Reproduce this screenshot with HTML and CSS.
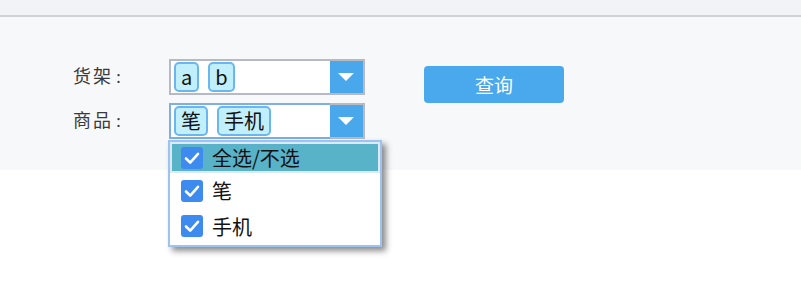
FILE: index.html
```html
<!DOCTYPE html>
<html lang="zh-CN">
<head>
<meta charset="utf-8">
<title>查询</title>
<link rel="stylesheet" href="styles.css">
</head>
<body>
<div class="topbar"></div>
<div class="panel">
  <div class="form">
    <div class="row">
      <span class="label">货架<span class="colon">:</span></span>
      <div class="select">
        <div class="field">
          <span class="tag">a</span>
          <span class="tag">b</span>
        </div>
        <div class="arrow"><span class="tri"></span></div>
      </div>
    </div>
    <div class="row">
      <span class="label">商品<span class="colon">:</span></span>
      <div class="select focused">
        <div class="field">
          <span class="tag">笔</span>
          <span class="tag">手机</span>
        </div>
        <div class="arrow"><span class="tri"></span></div>
        <ul class="dropdown">
          <li class="option active">
            <svg class="check" width="22" height="22" viewBox="0 0 22 22"><rect width="22" height="22" rx="3" fill="#3d8bee"/><path d="M5 11.5 L9.2 15.6 L17 6.8" fill="none" stroke="#fff" stroke-width="2.6" stroke-linecap="round" stroke-linejoin="round"/></svg>
            <span>全选/不选</span>
          </li>
          <li class="option">
            <svg class="check" width="22" height="22" viewBox="0 0 22 22"><rect width="22" height="22" rx="3" fill="#3d8bee"/><path d="M5 11.5 L9.2 15.6 L17 6.8" fill="none" stroke="#fff" stroke-width="2.6" stroke-linecap="round" stroke-linejoin="round"/></svg>
            <span>笔</span>
          </li>
          <li class="option">
            <svg class="check" width="22" height="22" viewBox="0 0 22 22"><rect width="22" height="22" rx="3" fill="#3d8bee"/><path d="M5 11.5 L9.2 15.6 L17 6.8" fill="none" stroke="#fff" stroke-width="2.6" stroke-linecap="round" stroke-linejoin="round"/></svg>
            <span>手机</span>
          </li>
        </ul>
      </div>
    </div>
  </div>
  <button class="query">查询</button>
</div>
</body>
</html>
```
FILE: styles.css
```css
html, body {
  margin: 0;
  padding: 0;
  background: #ffffff;
  font-family: "Noto Sans CJK SC", "Noto Sans", sans-serif;
}

body {
  min-height: 298px;
}

.topbar {
  height: 15px;
  background: #f2f3f7;
  border-bottom: 2px solid #d1d2d7;
}

.panel {
  position: relative;
  z-index: 1;
  height: 153px;
  box-sizing: border-box;
  background: #f7f8fa;
  padding: 42px 0 0 73px;
  display: flex;
  align-items: flex-start;
}

.form {
  display: flex;
  flex-direction: column;
  gap: 8px;
}

.row {
  display: flex;
  align-items: center;
  height: 36px;
}

.label {
  width: 96px;
  font-family: "Liberation Serif", "Noto Sans CJK SC", serif;
  font-size: 18px;
  letter-spacing: 2px;
  color: #3a3a3a;
  line-height: 20px;
}

.colon {
  padding-left: 3px;
}

.select {
  position: relative;
  display: flex;
  height: 36px;
}

.field {
  width: 161px;
  height: 36px;
  box-sizing: border-box;
  background: #ffffff;
  border: 2px solid #b7b9c7;
  border-right: none;
  display: flex;
  align-items: center;
  gap: 9px;
  padding: 0 0 0 3px;
}

.focused .field {
  border-color: #7eaee2;
}

.tag {
  height: 30px;
  box-sizing: border-box;
  border: 2px solid #6ab7f0;
  border-radius: 5px;
  background: #c1effb;
  padding: 0 5px;
  font-size: 20px;
  line-height: 26px;
  color: #111;
}

.arrow {
  width: 35px;
  height: 36px;
  box-sizing: border-box;
  background: #49a8ec;
  border: 2px solid #b9bac1;
  border-left: none;
  display: flex;
  align-items: center;
  justify-content: center;
  padding-right: 2px;
}

.tri {
  width: 0;
  height: 0;
  border-left: 8px solid transparent;
  border-right: 8px solid transparent;
  border-top: 8px solid #ffffff;
}

.dropdown {
  position: absolute;
  top: 37px;
  left: -1px;
  width: 214px;
  box-sizing: border-box;
  margin: 0;
  padding: 0 0 1px 0;
  list-style: none;
  background: #ffffff;
  border: 2px solid #9dc4f1;
  box-shadow: 4px 4px 6px rgba(0, 0, 0, 0.45);
  z-index: 5;
}

.option {
  height: 35px;
  box-sizing: border-box;
  border: 2px solid transparent;
  display: flex;
  align-items: center;
  padding-left: 9px;
  gap: 9px;
  font-size: 20px;
  color: #111;
}

.option.active {
  height: 31px;
  background: #58b3c8;
  border-color: #dbe9f8;
}

.option:last-child {
  height: 36px;
}

.check {
  flex: none;
  display: block;
}

.query {
  margin: 7px 0 0 59px;
  width: 140px;
  height: 37px;
  border: none;
  border-radius: 4px;
  background: #4aa9ec;
  color: #ffffff;
  font-family: "Noto Sans CJK SC", sans-serif;
  font-size: 19px;
  padding: 0;
  cursor: pointer;
}
```
